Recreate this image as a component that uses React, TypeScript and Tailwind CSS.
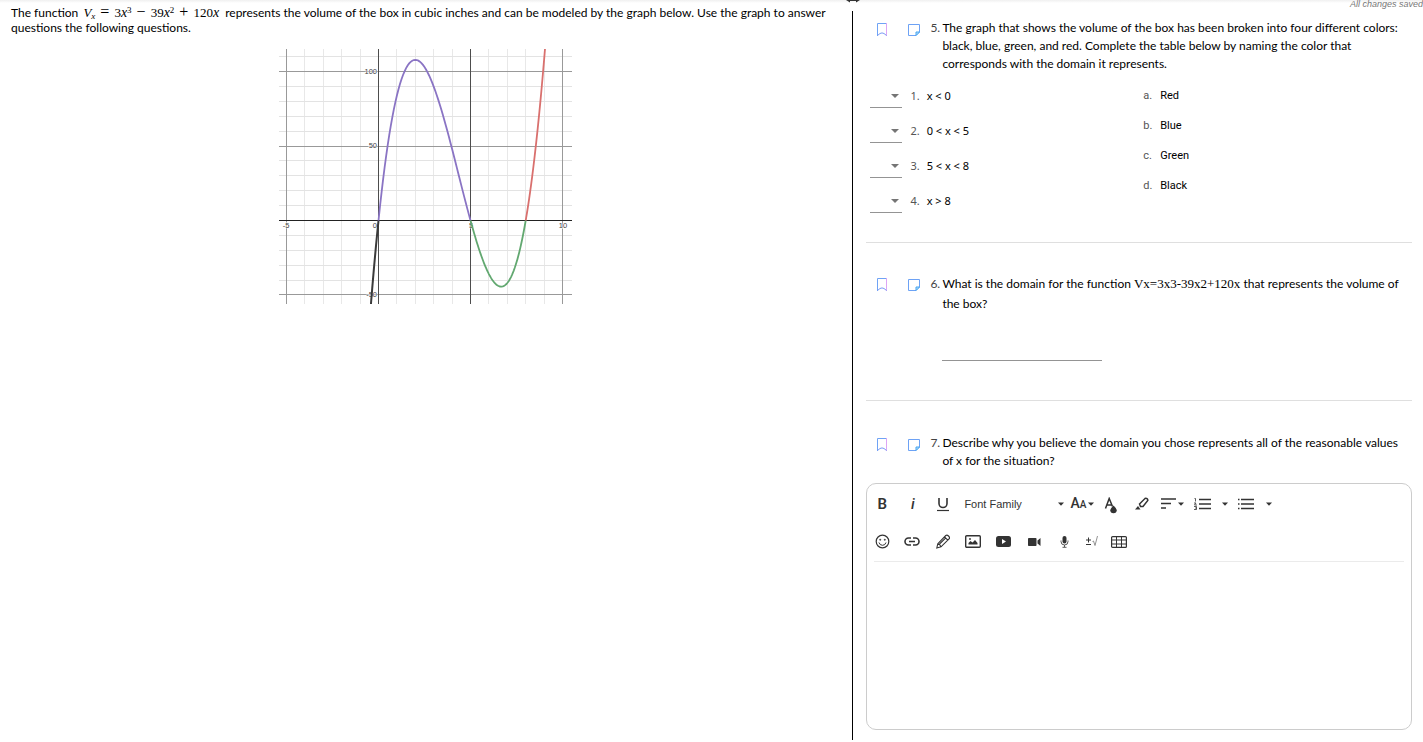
import type { ReactNode } from "react";

const X0 = 99;
const Y0 = 171;
const UX = 18.4;
const UY = 1.488;

function curve(from: number, to: number) {
  const points: string[] = [];
  for (let i = 0; i <= 60; i++) {
    const x = from + ((to - from) * i) / 60;
    const y = 3 * x ** 3 - 39 * x ** 2 + 120 * x;
    points.push(`${(X0 + x * UX).toFixed(2)},${(Y0 - y * UY).toFixed(2)}`);
  }
  return points.join(" ");
}

const columns = Array.from({ length: 16 }, (_, i) => i - 5);
const rows = Array.from({ length: 17 }, (_, i) => i * 10 - 50);

function GridColumn({ value, fill }: { value: number; fill: string }) {
  return <rect x={Math.round(X0 + value * UX)} y="0" width="1" height="255" fill={fill} />;
}

function GridRow({ value, fill }: { value: number; fill: string }) {
  return <rect x="0" y={Math.round(Y0 - value * UY)} width="293" height="1" fill={fill} />;
}

function VolumeGraph() {
  return (
    <svg
      className="block h-[255px] w-[293px] overflow-hidden"
      viewBox="0 0 293 255"
      role="img"
      aria-label="Graph of the volume function"
      fontFamily="Liberation Sans, sans-serif"
    >
      <g shapeRendering="crispEdges">
        {columns.filter((c) => c % 5 !== 0).map((c) => <GridColumn key={c} value={c} fill="#e8e8e8" />)}
        {rows.filter((r) => r % 50 !== 0).map((r) => <GridRow key={r} value={r} fill="#e3e3e3" />)}
        {[-50, 50, 100].map((r) => <GridRow key={r} value={r} fill="#999999" />)}
        {[-5, 10].map((c) => <GridColumn key={c} value={c} fill="#999999" />)}
        {[0, 5].map((c) => <GridColumn key={c} value={c} fill="#4d4d4d" />)}
        <GridRow value={0} fill="#222222" />
      </g>
      <g fontSize="7.5" fill="#444" stroke="#fff" strokeWidth="1" paintOrder="stroke">
        <text x="98" y="25" textAnchor="end">100</text>
        <text x="98" y="99" textAnchor="end">50</text>
        <text x="98" y="248" textAnchor="end">-50</text>
        <text x="98" y="179" textAnchor="end">0</text>
        <text x="7" y="179" textAnchor="middle">-5</text>
        <text x="192" y="179" textAnchor="middle">5</text>
        <text x="284" y="179" textAnchor="middle">10</text>
      </g>
      <g fill="none" strokeWidth="1.8" transform="translate(0.5 0.5)">
        <polyline points={curve(-0.6, 0)} stroke="#3a3a3a" strokeWidth="2" />
        <polyline points={curve(0, 5)} stroke="#8a74c4" />
        <polyline points={curve(5, 8)} stroke="#62a870" />
        <polyline points={curve(8, 9.4)} stroke="#d9706e" />
      </g>
    </svg>
  );
}

function Caret() {
  return (
    <svg className="h-1 w-1.5 shrink-0" viewBox="0 0 6 4" fill="#333">
      <path d="M0 .5h6L3 3.7z" />
    </svg>
  );
}

function Operator({ children }: { children: ReactNode }) {
  return <span className="mx-[5px] text-[16px] leading-none">{children}</span>;
}

function Question({ number, leading, children }: { number: number; leading?: string; children: ReactNode }) {
  return (
    <div className={`flex items-start ${leading ?? "leading-[18px]"}`}>
      <button type="button" aria-label={`Bookmark question ${number}`} className="ml-2.5 mt-[3px] flex h-4 w-3 shrink-0 justify-center">
        <svg className="shrink-0" width="12" height="15" viewBox="0 0 12 15" fill="none">
          <path d="M1.500 14V1.500h9" stroke="#6fa3f5" />
          <path d="M10.500 1v13" stroke="#dca6f5" />
          <path d="M1.500 13.500L4 11.500q2-1.200 4 0l2.500 2" stroke="#7b9bf5" />
        </svg>
      </button>
      <button type="button" aria-label={`Note for question ${number}`} className="ml-5 mt-1 flex h-4 w-3 shrink-0 justify-center">
        <svg className="shrink-0" width="12" height="14" viewBox="0 0 12 14" fill="none">
          <path d="M.5 12.500v-11h11V9L8 12.500z" stroke="#6da2f5" strokeLinejoin="round" />
          <path d="M8 12.500V9h3.500z" stroke="#45a5f0" fill="#bfe0fb" strokeLinejoin="round" />
        </svg>
      </button>
      <div className="ml-2.5 w-3 shrink-0 text-[#444]">{number}.</div>
      <p className="min-w-0 flex-1 pr-1">{children}</p>
    </div>
  );
}

const prompts = ["x < 0", "0 < x < 5", "5 < x < 8", "x > 8"];
const answers = ["Red", "Blue", "Green", "Black"];

function Tool({ label, children, wide }: { label: string; children: ReactNode; wide?: string }) {
  return (
    <button type="button" aria-label={label} className={`flex h-[37px] shrink-0 items-center justify-center text-[#333] ${wide ?? "w-[30px]"}`}>
      {children}
    </button>
  );
}

function Toolbar() {
  return (
    <div className="mx-[7px] border-b border-[#ebebeb] pt-px pb-px">
      <div className="-mx-[7px] flex">
        <Tool label="Bold"><span className="font-['Roboto',sans-serif] text-[15px] font-semibold">B</span></Tool>
        <Tool label="Italic" wide="w-[31px]"><span className="font-['Roboto',sans-serif] text-[15px] font-medium italic">i</span></Tool>
        <Tool label="Underline">
          <svg width="14" height="16" viewBox="0 0 14 16" fill="none" stroke="#333"><path d="M3 2v5.500a4 4 0 0 0 8 0V2" strokeWidth="1.600" /><path d="M1 14.500h12" strokeWidth="1.200" /></svg>
        </Tool>
        <button type="button" className="flex h-[37px] w-[110px] items-center justify-between pl-1.5 pr-1 font-['Liberation_Sans',sans-serif] text-[11px] text-[#333]">Font Family<Caret /></button>
        <Tool label="Font size" wide="w-[28px] gap-0.5">
          <span className="flex items-baseline font-['Roboto',sans-serif] text-[14px] font-medium">A<span className="text-[10px]">A</span></span>
          <Caret />
        </Tool>
        <Tool label="Text color">
          <svg className="mt-1" width="14" height="17" viewBox="0 0 14 17"><path d="M1.500 11.500L5.200 1.500L8.500 9.500M3 8h4.500" fill="none" stroke="#333" strokeWidth="1.500" /><path d="M9.500 8.500q3.200 3 3.200 4.800a3.200 2.900 0 0 1-6.400 0q0-1.800 3.200-4.800z" fill="#333" /></svg>
        </Tool>
        <Tool label="Highlight" wide="w-[31px]">
          <svg width="16" height="14" viewBox="0 0 16 14"><path d="M5.500 7L11 1.500q1-.6 2 .2t.8 1.800L9 9.500H6.500z" fill="none" stroke="#333" strokeWidth="1.500" /><path d="M1 12.500L4 9l2.500 3.500z" fill="#333" /></svg>
        </Tool>
        <Tool label="Align" wide="w-[30px] gap-0.5">
          <svg width="15" height="11" viewBox="0 0 15 11" stroke="#333" strokeWidth="1.500"><path d="M0 1h15M0 5.500h10M0 10h5" /></svg>
          <Caret />
        </Tool>
        <Tool label="Ordered list" wide="w-[31px]">
          <svg width="17" height="12" viewBox="0 0 17 12" fill="none" stroke="#333"><path d="M5 1.500h12M5 6h12M5 10.500h12" strokeWidth="1.600" /><path d="M.5.500h1v3M0 5h2L.5 7H3M0 8.500h2.500v3H0M1 10h1.500" strokeWidth=".8" /></svg>
        </Tool>
        <Tool label="Ordered list styles" wide="w-[13px]"><Caret /></Tool>
        <Tool label="Unordered list">
          <svg width="16" height="12" viewBox="0 0 16 12" stroke="#333" strokeWidth="1.600"><path d="M0 1.500h1.500M3 1.500h13M0 6h1.500M3 6h13M0 10.500h1.500M3 10.500h13" /></svg>
        </Tool>
        <Tool label="Unordered list styles" wide="w-4"><Caret /></Tool>
      </div>
      <div className="-mx-[7px] mt-px flex">
        <Tool label="Emoticons">
          <svg width="15" height="15" viewBox="0 0 15 15" fill="none" stroke="#333"><circle cx="7.500" cy="7.500" r="6.300" strokeWidth="1.200" /><path d="M4 8.500q.8 2.800 3.500 2.800T11 8.500" /><circle cx="5.200" cy="5.700" r=".7" fill="#333" strokeWidth=".4" /><circle cx="9.800" cy="5.700" r=".7" fill="#333" strokeWidth=".4" /></svg>
        </Tool>
        <Tool label="Link">
          <svg width="16" height="9" viewBox="0 0 16 9" fill="none" stroke="#333" strokeWidth="1.600"><path d="M7 1H4.500a3.500 3.500 0 0 0 0 7H7M9 1h2.500a3.500 3.500 0 0 1 0 7H9M5 4.500h6" /></svg>
        </Tool>
        <Tool label="Draw" wide="w-[31px]">
          <svg width="14" height="15" viewBox="0 0 14 15" fill="none" stroke="#333"><path d="M.8 14l1-4.300L9.800 1.500Q11 .5 12.500 2t.8 2.700L5 12.800zM1.800 9.700q2.500.5 3.200 3.100M8.500 2.800l3.300 3.300M3.500 10l6.300-6.200" strokeWidth="1.100" /></svg>
        </Tool>
        <Tool label="Image">
          <svg width="16" height="13" viewBox="0 0 16 13"><rect x=".7" y=".7" width="14.600" height="11.600" rx="1" fill="none" stroke="#333" strokeWidth="1.400" /><path d="M3.500 9.500V8L5.500 6l2 1.500L10 5l2.500 3v1.500z" fill="#333" /><circle cx="5" cy="4" r=".9" fill="#333" /></svg>
        </Tool>
        <Tool label="YouTube" wide="w-[31px]">
          <svg width="15" height="11" viewBox="0 0 15 11"><rect width="15" height="11" rx="2.500" fill="#333" /><path d="M6 3l4 2.500L6 8z" fill="#fff" /></svg>
        </Tool>
        <Tool label="Video">
          <svg width="13" height="8" viewBox="0 0 13 8" fill="#333"><rect width="8.500" height="8" rx=".8" /><path d="M9.500 2.500L12.500 0v8L9.500 5.500z" /></svg>
        </Tool>
        <Tool label="Microphone">
          <svg width="9" height="12" viewBox="0 0 9 12"><rect x="2.500" width="4" height="7.500" rx="2" fill="#333" /><path d="M1 4.500v1a3.500 3.500 0 0 0 7 0v-1M4.500 9v2M2.500 11.300h4" fill="none" stroke="#555" /></svg>
        </Tool>
        <Tool label="Equation" wide="w-[25px]">
          <svg width="13" height="11" viewBox="0 0 13 11" fill="none" stroke="#333"><path d="M3.500 1.500v5M1 4h5M1 8.500h5" /><path d="M7.500 5.500l1-.5L10 9.500L12.500 0" stroke="#777" strokeWidth=".8" /></svg>
        </Tool>
        <Tool label="Table">
          <svg width="16" height="12" viewBox="0 0 16 12" fill="none" stroke="#333"><rect x=".6" y=".6" width="14.800" height="10.800" rx="1" strokeWidth="1.200" /><path d="M0 4h16M0 8h16M5.500 0v12M10.500 0v12" /></svg>
        </Tool>
      </div>
    </div>
  );
}

export default function App() {
  return (
    <div className="relative flex min-h-[740px] bg-white bg-linear-to-b from-[#f0f0f0] to-white to-[3px] font-['Lato','Liberation_Sans',sans-serif] text-[12px] leading-[18px] text-black shadow-[0_2px_0_#f3f3f3]">
      <main className="w-[59.9%] min-w-0 pl-[11px] pr-3 pt-1">
        <p className="leading-[15px]">
          The function{" "}
          <span className="ml-0.5 mr-[3px] whitespace-nowrap font-['Liberation_Serif',serif] text-[13px] leading-[15px]">
            <i>V</i><sub className="text-[9px] leading-none"><i>x</i></sub><Operator>=</Operator>3<i className="text-[14px] leading-none">x</i><sup className="text-[9px] leading-none">3</sup><Operator>−</Operator>39<i className="text-[14px] leading-none">x</i><sup className="text-[9px] leading-none">2</sup><Operator>+</Operator>120<i className="text-[14px] leading-none">x</i>
          </span>{" "}
          represents the volume of the box in cubic inches and can be modeled by the graph below. Use the graph to answer questions the following questions.
        </p>
        <div className="mt-[14px] flex justify-center">
          <VolumeGraph />
        </div>
      </main>

      <div className="mt-[11px] w-px shrink-0 bg-black" />
      <svg className="absolute top-0 left-[59.4%] h-[3px] w-4" viewBox="0 0 16 3"><path d="M1 0h4v2.500zM11 0h4l-4 2.500zM3 0h10v1H3z" fill="#333" /></svg>

      <aside className="min-w-0 flex-1 pl-[13px] pr-[11px] pt-[19px]">
        <p className="absolute top-0 right-0 font-['Liberation_Sans',sans-serif] text-[9px] leading-[8px] italic text-[#777]">All changes saved</p>

        <section className="h-[224px] border-b border-[#dfdfdf]">
          <Question number={5}>
            The graph that shows the volume of the box has been broken into four different colors: black, blue, green, and red. Complete the table below by naming the color that corresponds with the domain it represents.
          </Question>
          <div className="mt-2.5 flex">
            <div className="w-1/2 pl-1">
              {prompts.map((prompt, i) => (
                <div key={prompt} className="mb-[10px] flex h-[25px] items-center gap-2">
                  <label htmlFor={`match-${i}`} className="order-2 font-['Noto_Sans',sans-serif] text-[11px]">
                    <span className="mr-[7px] text-[#555]">{i + 1}.</span>{prompt}
                  </label>
                  <div className="relative h-full w-8 border-b border-[#949494]">
                    <select id={`match-${i}`} className="h-full w-full appearance-none bg-transparent">
                      <option value=""></option>
                      {["a", "b", "c", "d"].map((letter) => <option key={letter}>{letter}</option>)}
                    </select>
                    <svg className="pointer-events-none absolute right-[3px] top-[11px]" width="8" height="4" viewBox="0 0 8 4" fill="#757575"><path d="M0 0h8L4 4z" /></svg>
                  </div>
                </div>
              ))}
            </div>
            <ul className="w-1/2 pl-1 pt-1 font-['Roboto',sans-serif] text-[11px]">
              {answers.map((answer, i) => (
                <li key={answer} className="mb-3 flex"><span className="w-[17px] text-[#555]">{"abcd"[i]}.</span>{answer}</li>
              ))}
            </ul>
          </div>
        </section>

        <section className="h-[158px] border-b border-[#dfdfdf] pt-[31px]">
          <Question number={6} leading="leading-[20px]">
            What is the domain for the function <span className="font-['Liberation_Serif',serif] text-[13px] leading-none">Vx=3x3-39x2+120x</span> that represents the volume of the box?
          </Question>
          <input aria-label="Answer to question 6" className="ml-[76px] mt-5 block h-[27px] w-40 border-b border-[#949494] bg-transparent outline-none" />
        </section>

        <section className="pt-[33px]">
          <Question number={7}>
            Describe why you believe the domain you chose represents all of the reasonable values of x for the situation?
          </Question>
          <div className="mt-[13px] rounded-[10px] border border-[#ccc]">
            <Toolbar />
            <textarea aria-label="Answer to question 7" className="block h-[167px] w-full resize-none bg-transparent p-2 outline-none" />
          </div>
        </section>
      </aside>
    </div>
  );
}
